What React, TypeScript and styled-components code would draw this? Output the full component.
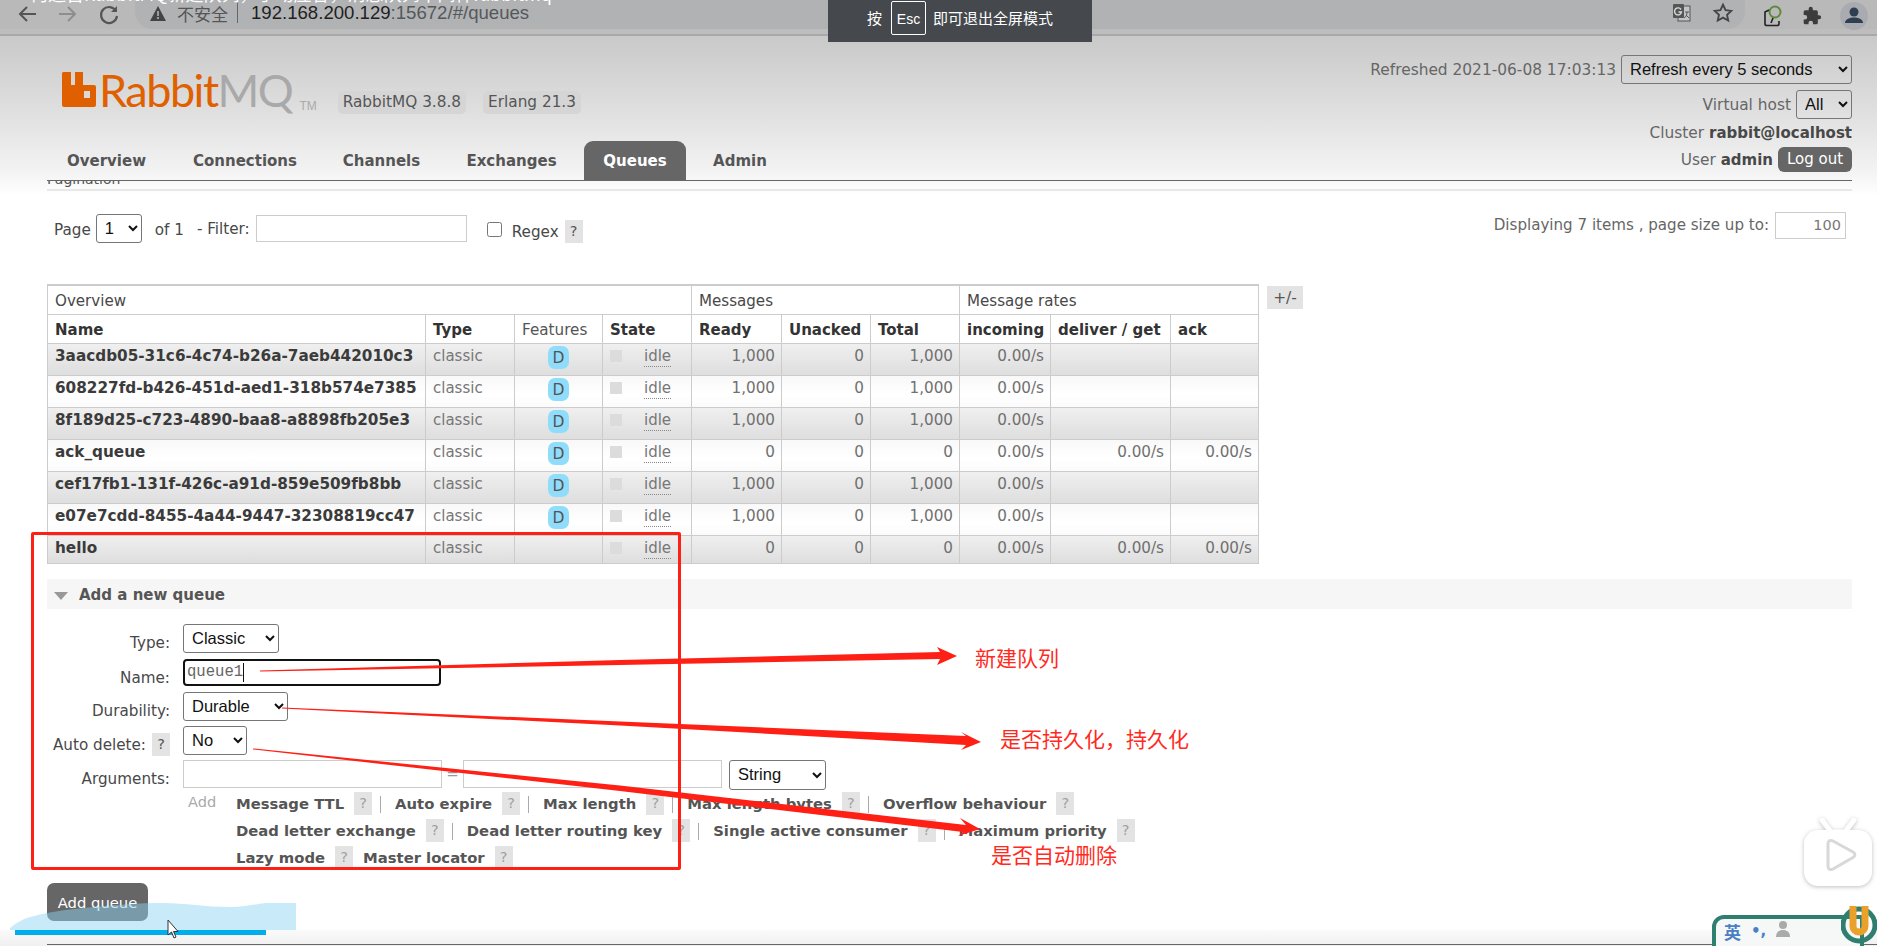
import React from "react";
import styled, { createGlobalStyle } from "styled-components";

const Global = createGlobalStyle`
  html, body { margin: 0; padding: 0; background: #fff; }
  body { font-family: "DejaVu Sans", Verdana, sans-serif; color: #484848; overflow: hidden; }
  * { box-sizing: border-box; }
`;

const Stage = styled.div`
  position: relative;
  width: 1877px;
  height: 946px;
  overflow: hidden;
  background: #fff;
`;

/* browser chrome */
const BrowserBar = styled.div`
  height: 36px;
  display: flex;
  align-items: flex-start;
  background: #b9b9b9;
  border-bottom: 2px solid #a9a9a9;
  box-shadow: inset 0 -5px 0 #bdbdbd;
`;
const NavIcons = styled.div`
  display: flex;
  gap: 17px;
  padding: 2px 0 0 15px;
  width: 135px;
  flex: none;
`;
const UrlPill = styled.div`
  width: 1610px;
  height: 29px;
  border-radius: 0 0 18px 18px;
  background: #b1b2b4;
  display: flex;
  align-items: center;
  padding: 0 11px 3px 15px;
  flex: none;
`;
const Insecure = styled.span`
  font: 17px "Noto Sans CJK SC", sans-serif;
  color: #555;
  margin-left: 11px;
`;
const UrlDivider = styled.span`
  width: 1px;
  height: 20px;
  background: #666;
  margin: 0 13px 0 9px;
`;
const UrlHost = styled.span`
  font: 18.6px "Liberation Sans", sans-serif;
  color: #1f1f1f;
`;
const UrlRest = styled.span`
  font: 18.6px "Liberation Sans", sans-serif;
  color: #55585b;
`;
const PillEnd = styled.div`
  margin-left: auto;
  display: flex;
  gap: 20px;
  align-items: center;
`;
const ExtIcons = styled.div`
  display: flex;
  align-items: center;
  gap: 18px;
  padding: 2px 0 0 17px;
`;

/* rabbit header */
const HeaderZone = styled.div`
  height: 159px;
  background: linear-gradient(#c9c9c9 0%, #dedede 45%, #f3f3f3 85%, #fff 100%);
`;
const Header = styled.div`
  height: 145px;
  margin: 0 25px 0 47px;
  border-bottom: 1px solid #666;
  display: flex;
  justify-content: space-between;
`;
const HeaderLeft = styled.div`
  display: flex;
  flex-direction: column;
  justify-content: space-between;
`;
const LogoRow = styled.div`
  display: flex;
  align-items: flex-start;
  padding: 36px 0 0 15px;
`;
const LogoMark = styled.svg`
  width: 34px;
  height: 35px;
  flex: none;
  margin-right: 3px;
`;
const LogoText = styled.div`
  font: 400 45px/36px Lato, sans-serif;
  letter-spacing: -1.5px;
  color: #e06000;
  white-space: nowrap;
`;
const LogoMQ = styled.span`
  color: #a9a9a9;
`;
const LogoTM = styled.span`
  font: 12px/12px "Liberation Sans", sans-serif;
  color: #aaa;
  margin: 28px 0 0 7px;
`;
const VersionBadge = styled.span`
  font-size: 15.3px;
  line-height: 23px;
  height: 23px;
  padding: 0 5px;
  border-radius: 5px;
  background: #d5d5d5;
  color: #555;
  white-space: nowrap;
`;
const Versions = styled.div`
  display: flex;
  gap: 17px;
  margin: 19px 0 0 21px;
`;
const Tabs = styled.div`
  display: flex;
`;
const Tab = styled.div<{ $active?: boolean; $w: number }>`
  width: ${(p) => p.$w}px;
  height: 39px;
  line-height: 40px;
  text-align: center;
  font-size: 15px;
  font-weight: bold;
  border-radius: 9px 9px 0 0;
  color: ${(p) => (p.$active ? "#fff" : "#555")};
  background: ${(p) => (p.$active ? "#666" : "transparent")};
`;
const HeaderRight = styled.div`
  padding-top: 16px;
  display: flex;
  flex-direction: column;
  align-items: flex-end;
  font-size: 15.4px;
  color: #666;
`;
const InfoRow = styled.div<{ $h: number }>`
  height: ${(p) => p.$h}px;
  display: flex;
  align-items: center;
  gap: 5px;
  white-space: nowrap;
`;
const Strong = styled.b`
  color: #484848;
  font-size: 15px;
`;
const LogOut = styled.span`
  width: 74px;
  height: 25px;
  line-height: 25px;
  text-align: center;
  border-radius: 6px;
  background: #666;
  color: #fff;
  font-size: 15px;
`;
const NativeSelect = styled.select<{ $w: number; $h?: number }>`
  width: ${(p) => p.$w}px;
  height: ${(p) => p.$h ?? 29}px;
  font: 16.5px "Liberation Sans", sans-serif;
  color: #111;
  border: 1px solid #767676;
  border-radius: 3px;
  background-color: transparent;
  padding: 0 0 2px 4px;
  flex: none;
`;
const SectionStrip = styled.div`
  height: 10px;
  margin: 0 25px 0 47px;
  border-bottom: 2px solid #e8e8e8;
  overflow: hidden;
  display: flex;
  align-items: flex-end;
  font-size: 14px;
  line-height: 18px;
  color: #555;
  padding-bottom: 1px;
`;

/* pagination */
const Pager = styled.div`
  display: flex;
  justify-content: space-between;
  margin: 19px 31px 0 54px;
  height: 31px;
  font-size: 15.2px;
  color: #484848;
`;
const PagerLeft = styled.div`
  display: flex;
  align-items: flex-start;
`;
const PagerText = styled.span<{ $l: number; $t: number }>`
  margin-left: ${(p) => p.$l}px;
  margin-top: ${(p) => p.$t}px;
  white-space: nowrap;
`;
const PageField = styled.select`
  width: 46px;
  height: 29px;
  margin-left: 5px;
  font: 16.5px "Liberation Sans", sans-serif;
  color: #111;
  border: 1px solid #767676;
  border-radius: 3px;
  background-color: transparent;
  padding: 0 0 2px 4px;
  flex: none;
`;
const TextField = styled.div<{ $w: number; $h: number; $l?: number; $t?: number }>`
  width: ${(p) => p.$w}px;
  height: ${(p) => p.$h}px;
  margin-left: ${(p) => p.$l ?? 0}px;
  margin-top: ${(p) => p.$t ?? 0}px;
  border: 1px solid #ccc;
  background: #fff;
  flex: none;
`;
const CheckBox = styled.input`
  width: 15px;
  height: 15px;
  margin: 8px 0 0 20px;
  flex: none;
`;
const Help = styled.span<{ $w?: number; $l?: number; $t?: number; $muted?: boolean }>`
  display: inline-block;
  width: ${(p) => p.$w ?? 18}px;
  height: 23px;
  line-height: 23px;
  text-align: center;
  margin-left: ${(p) => p.$l ?? 0}px;
  margin-top: ${(p) => p.$t ?? 0}px;
  background: #e3e3e3;
  font-size: 14.5px;
  font-weight: normal;
  color: ${(p) => (p.$muted ? "#a0a0a0" : "#555")};
  flex: none;
`;
const PageSize = styled.div`
  display: flex;
  align-items: flex-start;
  gap: 6px;
  color: #666;
  margin-top: -2px;
`;
const PageSizeLabel = styled.span`
  margin-top: 4px;
  white-space: nowrap;
  font-size: 15.1px;
`;
const PageSizeField = styled(TextField)`
  text-align: right;
  padding-right: 4px;
  line-height: 24px;
  font-size: 14.5px;
  color: #777;
`;

/* table */
const TableWrap = styled.div`
  display: flex;
  align-items: flex-start;
  gap: 8px;
  margin: 39px 0 0 47px;
  height: 278px;
`;
const Table = styled.table`
  border-collapse: collapse;
  table-layout: fixed;
  width: 1211px;
  border: 1px solid #ccc;
  border-top-width: 2px;
  font-size: 15px;
`;
const GroupCell = styled.th`
  height: 29px;
  padding: 2px 7px 0;
  font-weight: normal;
  text-align: left;
  font-size: 15.1px;
  color: #484848;
  border: 1px solid #ccc;
  background: #fff;
`;
const HeadCell = styled.th<{ $light?: boolean }>`
  height: 29px;
  padding: 2px 7px 0;
  text-align: left;
  font-size: 15px;
  font-weight: ${(p) => (p.$light ? "normal" : "bold")};
  ${(p) => (p.$light ? "font-size:15.2px;color:#555;" : "color:#333;")}
  border: 1px solid #ccc;
  background: #fff;
  white-space: nowrap;
`;
const Row = styled.tr<{ $odd: boolean }>`
  background: ${(p) =>
    p.$odd
      ? "linear-gradient(#f0f0f0, #dedede)"
      : "linear-gradient(#f8f8f8 0%, #fff 60%, #fbfbfb 100%)"};
`;
const Cell = styled.td<{ $h: number }>`
  height: ${(p) => p.$h}px;
  padding: 0 7px;
  vertical-align: top;
  border: 1px solid #ccc;
  line-height: 24px;
  color: #777;
  white-space: nowrap;
  overflow: hidden;
`;
const NameCell = styled(Cell)`
  font-weight: bold;
  color: #3b3b3b;
  font-size: 15.25px;
`;
const NumCell = styled(Cell)`
  text-align: right;
  padding-right: 6px;
  color: #707070;
  font-size: 15.2px;
`;
const FeatCell = styled(Cell)`
  text-align: center;
  padding: 2px 0 0;
`;
const DBadge = styled.span`
  display: inline-block;
  width: 21px;
  height: 23px;
  line-height: 24px;
  border-radius: 7px;
  background: #8fdcfb;
  color: #555;
  font-size: 15.5px;
  text-align: center;
`;
const StateCell = styled(Cell)`
  padding: 0 0 0 7px;
`;
const StateInner = styled.div`
  display: flex;
  align-items: flex-start;
`;
const StateDot = styled.i`
  display: block;
  width: 12px;
  height: 12px;
  background: #dcdcdc;
  margin-top: 6px;
`;
const Idle = styled.span`
  margin-left: 22px;
  line-height: 17px;
  margin-top: 4px;
  border-bottom: 1px dotted #888;
  height: 19px;
  color: #777;
`;
const PlusMinus = styled.div`
  width: 36px;
  height: 23px;
  margin-top: 2px;
  background: #e3e3e3;
  text-align: center;
  line-height: 25px;
  font-size: 15.4px;
  color: #555;
`;

/* add queue */
const AddSection = styled.div`
  margin: 17px 25px 0 47px;
  height: 30px;
  background: #f6f6f6;
  display: flex;
  align-items: center;
  font-weight: bold;
  font-size: 15px;
  color: #555;
  padding: 2px 0 0 7px;
`;
const Triangle = styled.span`
  width: 0;
  height: 0;
  border-left: 7px solid transparent;
  border-right: 7px solid transparent;
  border-top: 8px solid #999;
  margin: 1px 11px 0 0;
`;
const Form = styled.div`
  display: grid;
  grid-template-columns: 123px auto;
  column-gap: 13px;
  margin: 15px 0 0 47px;
  align-items: start;
  font-size: 15px;
  color: #484848;
`;
const Label = styled.div<{ $h: number }>`
  height: ${(p) => p.$h}px;
  padding-top: 10px;
  display: flex;
  justify-content: flex-end;
  align-items: flex-start;
  gap: 6px;
  white-space: nowrap;
  font-size: 15.2px;
`;
const Field = styled.div<{ $h: number }>`
  height: ${(p) => p.$h}px;
  display: flex;
  align-items: flex-start;
`;
const NameInput = styled.div`
  width: 258px;
  height: 27px;
  border: 2px solid #111;
  border-radius: 4px;
  font: 15.6px/21px "Liberation Mono", "DejaVu Sans Mono", monospace;
  padding: 0 0 0 2px;
  color: #666;
  display: flex;
  align-items: center;
`;
const Caret = styled.i`
  display: block;
  width: 1px;
  height: 19px;
  background: #111;
`;
const Equal = styled.span`
  width: 21px;
  text-align: center;
  color: #999;
  margin-top: 5px;
`;
const ArgSelect = styled(NativeSelect)`
  margin-left: 7px;
`;
const ArgBlock = styled.div`
  grid-column: 2;
  display: flex;
  margin-top: -4px;
`;
const AddLink = styled.div`
  width: 53px;
  padding-left: 5px;
  color: #aaa;
  font-size: 14.6px;
  margin-top: 3px;
`;
const HintRows = styled.div`
  display: flex;
  flex-direction: column;
`;
const HintRow = styled.div`
  height: 27px;
  display: flex;
  align-items: center;
  font-weight: bold;
  font-size: 14.8px;
  color: #555;
  white-space: nowrap;
`;
const HintGap = styled.span`
  width: 10px;
  flex: none;
`;
const Pipe = styled.span`
  width: 1px;
  height: 17px;
  background: #aaa;
  margin: 2px 14px 0 8px;
  flex: none;
`;
const SubmitRow = styled.div`
  margin: 12px 0 0 47px;
`;
const Submit = styled.div`
  width: 101px;
  height: 38px;
  line-height: 39px;
  border-radius: 7px;
  background: #666;
  color: #fff;
  text-align: center;
  font-size: 14.8px;
`;

/* overlays */
const Clipped = styled.div`
  position: absolute;
  left: 30px;
  top: -16px;
  width: 640px;
  font: 18px/18px "Noto Sans CJK SC", sans-serif;
  color: #fff;
  white-space: nowrap;
`;
const EscNotice = styled.div`
  position: absolute;
  left: 828px;
  top: 0;
  width: 264px;
  height: 42px;
  padding-bottom: 7px;
  background: #45494d;
  color: #fff;
  font: 15px "Noto Sans CJK SC", sans-serif;
  display: flex;
  align-items: center;
  justify-content: center;
`;
const EscKey = styled.span`
  border: 1px solid #fff;
  border-radius: 2px;
  height: 34px;
  width: 35px;
  line-height: 34px;
  text-align: center;
  margin: 0 7px 0 9px;
  font-family: "Liberation Sans", sans-serif;
  font-size: 14px;
`;
const RedBox = styled.div`
  position: absolute;
  left: 31px;
  top: 532px;
  width: 650px;
  height: 338px;
  border: 3px solid #ff2015;
  border-radius: 2px;
  pointer-events: none;
`;
const Arrows = styled.svg`
  position: absolute;
  left: 0;
  top: 0;
`;
const Note = styled.div<{ $x: number; $y: number }>`
  position: absolute;
  left: ${(p) => p.$x}px;
  top: ${(p) => p.$y}px;
  font: 21px/28px "Noto Sans CJK SC", sans-serif;
  color: #ff2a1e;
  white-space: nowrap;
`;
const Wave = styled.svg`
  position: absolute;
  left: 0;
  top: 895px;
`;
const BottomBar = styled.div`
  position: absolute;
  left: 0;
  right: 0;
  top: 930px;
  height: 16px;
  background: linear-gradient(#fafafa, #f0f0f0);
`;
const BottomLine = styled.div`
  position: absolute;
  left: 47px;
  right: 0;
  top: 944px;
  height: 1px;
  background: #666;
`;
const TvIcon = styled.svg`
  position: absolute;
  left: 1802px;
  top: 818px;
  filter: drop-shadow(0 1px 2px rgba(0, 0, 0, 0.25));
`;
const Ime = styled.div`
  position: absolute;
  left: 1712px;
  top: 915px;
  width: 152px;
  height: 40px;
  border: 4px solid #2f7f70;
  border-radius: 12px 0 0 0;
  background: #f6f8f8;
  display: flex;
  align-items: flex-start;
  padding: 1px 0 0 8px;
  gap: 10px;
`;
const ImeChar = styled.span`
  font: bold 17px/24px "Noto Sans CJK SC", sans-serif;
  color: #4a7fc8;
`;
const ImeDots = styled.span`
  font: bold 15px/22px "DejaVu Sans", sans-serif;
  color: #4a7fc8;
`;
const ImeLogo = styled.svg`
  position: absolute;
  left: 1841px;
  top: 904px;
`;
const Pointer = styled.svg`
  position: absolute;
  left: 167px;
  top: 919px;
`;

const Back = ({ c }: { c: string }) => (
  <svg width="24" height="24" viewBox="0 0 24 24" fill="none" stroke={c} strokeWidth="2">
    <path d="M21 12H5M12 5l-7 7 7 7" />
  </svg>
);
const Forward = ({ c }: { c: string }) => (
  <svg width="24" height="24" viewBox="0 0 24 24" fill="none" stroke={c} strokeWidth="2">
    <path d="M3 12h16M12 5l7 7-7 7" />
  </svg>
);
const Reload = () => (
  <svg width="24" height="24" viewBox="0 0 24 24" fill="none" stroke="#555" strokeWidth="2.2">
    <path d="M19 9a8 8 0 1 0 1 5" />
    <path d="M20 4v6h-6" fill="#555" stroke="none" />
  </svg>
);

const rows = [
  ["3aacdb05-31c6-4c74-b26a-7aeb442010c3", true, "1,000", "0", "1,000", "0.00/s", "", ""],
  ["608227fd-b426-451d-aed1-318b574e7385", true, "1,000", "0", "1,000", "0.00/s", "", ""],
  ["8f189d25-c723-4890-baa8-a8898fb205e3", true, "1,000", "0", "1,000", "0.00/s", "", ""],
  ["ack_queue", true, "0", "0", "0", "0.00/s", "0.00/s", "0.00/s"],
  ["cef17fb1-131f-426c-a91d-859e509fb8bb", true, "1,000", "0", "1,000", "0.00/s", "", ""],
  ["e07e7cdd-8455-4a44-9447-32308819cc47", true, "1,000", "0", "1,000", "0.00/s", "", ""],
  ["hello", false, "0", "0", "0", "0.00/s", "0.00/s", "0.00/s"],
] as const;

const colWidths = [378, 89, 88, 89, 90, 89, 89, 91, 120, 88];

const hintRows: { t: string; pipe: boolean }[][] = [
  [
    { t: "Message TTL", pipe: true },
    { t: "Auto expire", pipe: true },
    { t: "Max length", pipe: true },
    { t: "Max length bytes", pipe: true },
    { t: "Overflow behaviour", pipe: false },
  ],
  [
    { t: "Dead letter exchange", pipe: true },
    { t: "Dead letter routing key", pipe: true },
    { t: "Single active consumer", pipe: true },
    { t: "Maximum priority", pipe: false },
  ],
  [
    { t: "Lazy mode", pipe: false },
    { t: "Master locator", pipe: false },
  ],
];

export default function App() {
  return (
    <Stage>
      <Global />
      <BrowserBar>
        <NavIcons>
          <Back c="#555" />
          <Forward c="#8e8e8e" />
          <Reload />
        </NavIcons>
        <UrlPill>
          <svg width="16" height="15" viewBox="0 0 16 15">
            <path d="M8 0l8 15H0z" fill="#444" />
            <path d="M7.2 5h1.6v5H7.2zM7.2 11h1.6v2H7.2z" fill="#b1b2b4" />
          </svg>
          <Insecure>不安全</Insecure>
          <UrlDivider />
          <UrlHost>192.168.200.129</UrlHost>
          <UrlRest>:15672/#/queues</UrlRest>
          <PillEnd>
            <svg width="20" height="20" viewBox="0 0 20 20">
              <rect x="6" y="3" width="12" height="15" fill="#c4c4c4" stroke="#555" />
              <rect x="1" y="1" width="11" height="14" rx="1" fill="#555" />
              <path d="M9 6.500A3.500 3.500 0 1 0 9.500 9H6.500" fill="none" stroke="#ddd" strokeWidth="1.400" />
              <path d="M13 9h4M15 9c0 3-1 5-3 6M14 12l3 3" fill="none" stroke="#555" strokeWidth="1" />
            </svg>
            <svg width="22" height="22" viewBox="0 0 24 24" fill="none" stroke="#444" strokeWidth="2">
              <path d="M12 3l2.800 6 6.200.7-4.600 4.200 1.300 6.300L12 17l-5.700 3.200 1.300-6.300L3 9.700l6.200-.7z" />
            </svg>
          </PillEnd>
        </UrlPill>
        <ExtIcons>
          <svg width="22" height="24" viewBox="0 0 22 24" fill="none">
            <circle cx="13" cy="8" r="5.500" stroke="#5f8a3a" strokeWidth="2" />
            <path d="M7 6L3 8v12c0 1 1 1.500 2 1.500h10c1 0 2-.5 2-1.500v-3" stroke="#222" strokeWidth="1.600" />
            <path d="M11 14l-2 5" stroke="#222" strokeWidth="1.600" />
          </svg>
          <svg width="20" height="20" viewBox="0 0 24 24" fill="#3c3c3c">
            <path d="M20.500 11H19V7a2 2 0 0 0-2-2h-4V3.500a2.500 2.500 0 0 0-5 0V5H4a2 2 0 0 0-2 2v3.800h1.500a2.700 2.700 0 0 1 0 5.400H2V20a2 2 0 0 0 2 2h3.800v-1.500a2.700 2.700 0 0 1 5.400 0V22H17a2 2 0 0 0 2-2v-4h1.500a2.500 2.500 0 0 0 0-5z" />
          </svg>
          <svg width="28" height="28" viewBox="0 0 28 28">
            <circle cx="14" cy="14" r="14" fill="#a9abb0" />
            <circle cx="14" cy="10" r="4.500" fill="#2f3f52" />
            <path d="M5 21c0-4 5-5.500 9-5.500s9 1.500 9 5.500z" fill="#2f3f52" />
          </svg>
        </ExtIcons>
      </BrowserBar>

      <HeaderZone>
        <Header>
          <HeaderLeft>
            <LogoRow>
              <LogoMark viewBox="0 0 34 35">
                <path
                  fillRule="evenodd"
                  d="M1 0h8v13h4V0h8v13h11a2 2 0 0 1 2 2v18a2 2 0 0 1-2 2H2a2 2 0 0 1-2-2V1zM22 19v7h6v-7z"
                  fill="#e06000"
                />
              </LogoMark>
              <LogoText>
                Rabbit<LogoMQ>MQ</LogoMQ>
              </LogoText>
              <LogoTM>TM</LogoTM>
              <Versions>
                <VersionBadge>RabbitMQ 3.8.8</VersionBadge>
                <VersionBadge>Erlang 21.3</VersionBadge>
              </Versions>
            </LogoRow>
            <Tabs>
              <Tab $w={119}>Overview</Tab>
              <Tab $w={158}>Connections</Tab>
              <Tab $w={115}>Channels</Tab>
              <Tab $w={145}>Exchanges</Tab>
              <Tab $active $w={102}>Queues</Tab>
              <Tab $w={108}>Admin</Tab>
            </Tabs>
          </HeaderLeft>
          <HeaderRight>
            <InfoRow $h={35}>
              Refreshed 2021-06-08 17:03:13
              <NativeSelect $w={231} defaultValue="5">
                <option value="5">Refresh every 5 seconds</option>
              </NativeSelect>
            </InfoRow>
            <InfoRow $h={35}>
              Virtual host
              <NativeSelect $w={56} defaultValue="all">
                <option value="all">All</option>
              </NativeSelect>
            </InfoRow>
            <InfoRow $h={22}>
              <span>
                Cluster <Strong>rabbit@localhost</Strong>
              </span>
            </InfoRow>
            <InfoRow $h={31}>
              <span>
                User <Strong>admin</Strong>
              </span>
              <LogOut>Log out</LogOut>
            </InfoRow>
          </HeaderRight>
        </Header>
        <SectionStrip>Pagination</SectionStrip>
      </HeaderZone>

      <Pager>
        <PagerLeft>
          <PagerText $l={0} $t={7}>Page</PagerText>
          <PageField defaultValue="1">
            <option value="1">1</option>
          </PageField>
          <PagerText $l={13} $t={7}>of 1</PagerText>
          <PagerText $l={13} $t={6}>- Filter:</PagerText>
          <TextField $w={211} $h={27} $l={6} $t={1} />
          <CheckBox type="checkbox" />
          <PagerText $l={10} $t={9}>Regex</PagerText>
          <Help $l={6} $t={6}>?</Help>
        </PagerLeft>
        <PageSize>
          <PageSizeLabel>Displaying 7 items , page size up to:</PageSizeLabel>
          <PageSizeField $w={71} $h={27}>100</PageSizeField>
        </PageSize>
      </Pager>

      <TableWrap>
        <Table>
          <colgroup>
            {colWidths.map((w, i) => (
              <col key={i} style={{ width: w }} />
            ))}
          </colgroup>
          <thead>
            <tr>
              <GroupCell colSpan={4}>Overview</GroupCell>
              <GroupCell colSpan={3}>Messages</GroupCell>
              <GroupCell colSpan={3}>Message rates</GroupCell>
            </tr>
            <tr>
              <HeadCell>Name</HeadCell>
              <HeadCell>Type</HeadCell>
              <HeadCell $light>Features</HeadCell>
              <HeadCell>State</HeadCell>
              <HeadCell>Ready</HeadCell>
              <HeadCell>Unacked</HeadCell>
              <HeadCell>Total</HeadCell>
              <HeadCell>incoming</HeadCell>
              <HeadCell>deliver / get</HeadCell>
              <HeadCell>ack</HeadCell>
            </tr>
          </thead>
          <tbody>
            {rows.map((r, i) => {
              const h = i === rows.length - 1 ? 28 : 32;
              return (
                <Row key={r[0]} $odd={i % 2 === 0}>
                  <NameCell $h={h}>{r[0]}</NameCell>
                  <Cell $h={h}>classic</Cell>
                  <FeatCell $h={h}>{r[1] && <DBadge>D</DBadge>}</FeatCell>
                  <StateCell $h={h}>
                    <StateInner>
                      <StateDot />
                      <Idle>idle</Idle>
                    </StateInner>
                  </StateCell>
                  <NumCell $h={h}>{r[2]}</NumCell>
                  <NumCell $h={h}>{r[3]}</NumCell>
                  <NumCell $h={h}>{r[4]}</NumCell>
                  <NumCell $h={h}>{r[5]}</NumCell>
                  <NumCell $h={h}>{r[6]}</NumCell>
                  <NumCell $h={h}>{r[7]}</NumCell>
                </Row>
              );
            })}
          </tbody>
        </Table>
        <PlusMinus>+/-</PlusMinus>
      </TableWrap>

      <AddSection>
        <Triangle />
        Add a new queue
      </AddSection>

      <Form>
        <Label $h={35}>Type:</Label>
        <Field $h={35}>
          <NativeSelect $w={96} defaultValue="c">
            <option value="c">Classic</option>
          </NativeSelect>
        </Field>
        <Label $h={33}>Name:</Label>
        <Field $h={33}>
          <NameInput>
            queue1
            <Caret />
          </NameInput>
        </Field>
        <Label $h={34}>Durability:</Label>
        <Field $h={34}>
          <NativeSelect $w={105} defaultValue="d">
            <option value="d">Durable</option>
          </NativeSelect>
        </Field>
        <Label $h={34}>
          Auto delete:
          <Help $t={-3}>?</Help>
        </Label>
        <Field $h={34}>
          <NativeSelect $w={64} defaultValue="n">
            <option value="n">No</option>
          </NativeSelect>
        </Field>
        <Label $h={34}>Arguments:</Label>
        <Field $h={34}>
          <TextField $w={259} $h={28} />
          <Equal>=</Equal>
          <TextField $w={259} $h={28} />
          <ArgSelect $w={97} $h={30} defaultValue="s">
            <option value="s">String</option>
          </ArgSelect>
        </Field>
        <ArgBlock>
          <AddLink>Add</AddLink>
          <HintRows>
            {hintRows.map((row, i) => (
              <HintRow key={i}>
                {row.map((h) => (
                  <React.Fragment key={h.t}>
                    {h.t}
                    <HintGap />
                    <Help $muted>?</Help>
                    {h.pipe ? <Pipe /> : <HintGap />}
                  </React.Fragment>
                ))}
              </HintRow>
            ))}
          </HintRows>
        </ArgBlock>
      </Form>

      <SubmitRow>
        <Submit>Add queue</Submit>
      </SubmitRow>

      <Clipped>何通告RabbitMQ新建队列，手动应答，消息队列中间件rabbitmq</Clipped>
      <EscNotice>
        按<EscKey>Esc</EscKey>即可退出全屏模式
      </EscNotice>

      <RedBox />
      <Arrows width="1877" height="946" viewBox="0 0 1877 946" fill="#ff2015">
        <path d="M260 670.500L620 660 940 652 937 647 957 656 937 665 940 659 620 665 260 671.500z" />
        <path d="M282 707.500L620 721.500 966 736 961 732 981 742 961 750 966 745 620 725.500 282 708.500z" />
        <path d="M253 748.500L620 785.500 966 825 960 818 980 829 958 836 963 832 620 791 253 749.500z" />
      </Arrows>
      <Note $x={975} $y={643}>新建队列</Note>
      <Note $x={1000} $y={724}>是否持久化，持久化</Note>
      <Note $x={991} $y={840}>是否自动删除</Note>

      <BottomBar />
      <BottomLine />
      <Wave width="296" height="42" viewBox="0 0 296 42">
        <path
          d="M10 33C16 28 24 23 34 21C50 17 64 15 84 13C110 10 140 8 164 8C185 8 205 12 231 12C245 12 255 9 266 8L296 8V35H10z"
          fill="#8fd6f3"
          fillOpacity="0.48"
        />
        <rect x="15" y="35" width="251" height="5" fill="#00aeec" />
      </Wave>
      <Pointer width="12" height="20" viewBox="0 0 12 20">
        <path d="M1 1v15l3.500-3 2.500 6 2-1-2.500-5.500H11z" fill="#fff" stroke="#333" strokeWidth="1" />
      </Pointer>
      <TvIcon width="72" height="70" viewBox="0 0 72 70">
        <path d="M20 2l9 12h14l9-12" fill="none" stroke="#fff" strokeWidth="5" strokeLinecap="round" />
        <rect x="2" y="12" width="68" height="56" rx="14" fill="#fff" />
        <path
          d="M26 30c0-3 2-4.500 5-3l20 11c2.500 1.500 2.500 4 0 5.500L31 55c-3 1.500-5 0-5-3z"
          fill="none"
          stroke="#d8d8d8"
          strokeWidth="3"
          transform="translate(0,-4)"
        />
      </TvIcon>
      <Ime>
        <ImeChar>英</ImeChar>
        <ImeDots>•,</ImeDots>
        <svg width="14" height="18" viewBox="0 0 14 18" fill="#aaa">
          <circle cx="7" cy="5" r="4" />
          <path d="M0 17c0-5 3-7 7-7s7 2 7 7z" />
        </svg>
      </Ime>
      <ImeLogo width="36" height="42" viewBox="0 0 36 42">
        <circle cx="18" cy="21" r="16" fill="none" stroke="#2f7f70" strokeWidth="5" />
        <path d="M12 2v20a6 6 0 0 0 12 0V2" fill="none" stroke="#e9a12c" strokeWidth="7" />
      </ImeLogo>
    </Stage>
  );
}
